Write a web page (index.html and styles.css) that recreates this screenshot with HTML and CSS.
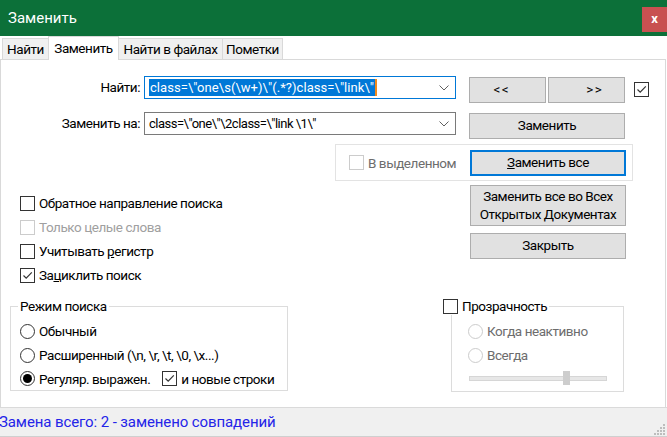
FILE: index.html
```html
<!DOCTYPE html>
<html lang="ru">
<head>
<meta charset="utf-8">
<title>Заменить</title>
<link rel="stylesheet" href="styles.css">
</head>
<body>
<div class="window">
  <header class="titlebar">
    <span class="title">Заменить</span>
    <span class="close">x</span>
  </header>
  <nav class="tabs">
    <span class="tab t1">Найти</span>
    <span class="tab t2 active">Заменить</span>
    <span class="tab t3">Найти в файлах</span>
    <span class="tab t4">Пометки</span>
  </nav>
  <main class="panel">
    <div class="row row-find">
      <span class="lbl">Найти:</span>
      <div class="combo focused">
        <span class="combo-text find-text"><span class="sel">class=\"one\s(\w+)\"(.*?)class=\"link\"</span><span class="caret"></span></span>
        <svg class="chev" width="10" height="6" viewBox="0 0 10 6"><path d="M0.5 0.5 L5 5 L9.5 0.5" fill="none" stroke="#606060" stroke-width="1"/></svg>
      </div>
      <button class="btn nav first"><span class="arrows">&lt; &lt;</span></button>
      <button class="btn nav second"><span class="arrows">&gt; &gt;</span></button>
      <span class="cb checked top-cb"><svg width="13" height="13" viewBox="0 0 13 13"><path d="M2.5 6.5 L5.2 9.2 L10.8 3.4" fill="none" stroke="#333" stroke-width="1.2"/></svg></span>
    </div>
    <div class="row row-replace">
      <span class="lbl">Заменить на:</span>
      <div class="combo">
        <span class="combo-text repl-text">class=\"one\"\2class=\"link \1\"</span>
        <svg class="chev" width="10" height="6" viewBox="0 0 10 6"><path d="M0.5 0.5 L5 5 L9.5 0.5" fill="none" stroke="#606060" stroke-width="1"/></svg>
      </div>
      <button class="btn wide">Заменить</button>
    </div>
    <div class="selgroup">
      <span class="cb disabled"></span>
      <span class="opt-text muted">В выделенном</span>
      <button class="btn wide default"><u>З</u>аменить все</button>
    </div>
    <div class="mid">
      <div class="options">
        <div class="opt"><span class="cb"></span><span class="opt-text">Обратное направление поиска</span></div>
        <div class="opt"><span class="cb disabled"></span><span class="opt-text light">Только целые слова</span></div>
        <div class="opt"><span class="cb"></span><span class="opt-text">Учитывать <u>р</u>егистр</span></div>
        <div class="opt"><span class="cb checked"><svg width="13" height="13" viewBox="0 0 13 13"><path d="M2.5 6.5 L5.2 9.2 L10.8 3.4" fill="none" stroke="#333" stroke-width="1.2"/></svg></span><span class="opt-text">За<u>ц</u>иклить поиск</span></div>
      </div>
      <div class="actions">
        <button class="btn wide tall">Заменить все во Всех<br>Открытых <u>Д</u>окументах</button>
        <button class="btn wide close-btn">Закрыть</button>
      </div>
    </div>
    <div class="bottom">
      <fieldset class="group mode">
        <legend class="legend">Режим поиска</legend>
        <div class="opt"><span class="radio"></span><span class="opt-text">Обычный</span></div>
        <div class="opt"><span class="radio"></span><span class="opt-text">Расширенный (\n, \r, \t, \0, \x...)</span></div>
        <div class="opt"><span class="radio on"></span><span class="opt-text">Регуляр. выражен.</span><span class="cb checked nl-cb"><svg width="13" height="13" viewBox="0 0 13 13"><path d="M2.5 6.5 L5.2 9.2 L10.8 3.4" fill="none" stroke="#333" stroke-width="1.2"/></svg></span><span class="opt-text">и новые строки</span></div>
      </fieldset>
      <fieldset class="group trans">
        <legend class="legend trans-legend"><span class="cb"></span><span class="opt-text">Прозрачность</span></legend>
        <div class="opt"><span class="radio disabled"></span><span class="opt-text muted">Когда неактивно</span></div>
        <div class="opt"><span class="radio disabled"></span><span class="opt-text muted">Всегда</span></div>
        <div class="slider"><span class="track"></span><span class="thumb"></span></div>
      </fieldset>
    </div>
  </main>
  <footer class="status">
    <span class="status-text">Замена всего: 2 - заменено совпадений</span>
    <svg class="grip" width="12" height="12" viewBox="0 0 12 12">
      <rect x="9" y="1" width="2" height="2" fill="#bdbdbd"/>
      <rect x="6" y="4" width="2" height="2" fill="#bdbdbd"/>
      <rect x="9" y="4" width="2" height="2" fill="#bdbdbd"/>
      <rect x="3" y="7" width="2" height="2" fill="#bdbdbd"/>
      <rect x="6" y="7" width="2" height="2" fill="#bdbdbd"/>
      <rect x="9" y="7" width="2" height="2" fill="#bdbdbd"/>
      <rect x="0" y="10" width="2" height="2" fill="#bdbdbd"/>
      <rect x="3" y="10" width="2" height="2" fill="#bdbdbd"/>
      <rect x="6" y="10" width="2" height="2" fill="#bdbdbd"/>
      <rect x="9" y="10" width="2" height="2" fill="#bdbdbd"/>
    </svg>
  </footer>
</div>
</body>
</html>
```
FILE: styles.css
```css
* { box-sizing: border-box; }
html, body { margin: 0; padding: 0; }
body {
  width: 667px;
  height: 437px;
  overflow: hidden;
  background: #ffffff;
  font-family: Roboto, "Noto Sans", sans-serif;
  font-size: 13.5px;
  letter-spacing: -0.45px;
  color: #000;
}
.window { width: 667px; height: 437px; display: flex; flex-direction: column; }

.titlebar {
  height: 36px;
  background: #0c7039;
  display: flex;
  align-items: center;
  justify-content: space-between;
  padding-left: 8px;
}
.title { color: #fff; font-size: 15px; letter-spacing: 0; }
.close {
  width: 25px; height: 25px;
  background: #c85151;
  color: #fff;
  font-weight: bold;
  font-size: 13px;
  letter-spacing: 0;
  display: flex; align-items: center; justify-content: center;
  line-height: 1;
  padding-bottom: 2px;
  margin-top: 2px;
}

.tabs {
  height: 23px;
  display: flex;
  align-items: flex-end;
  padding-left: 2px;
  position: relative;
  z-index: 1;
}
.tab {
  height: 21px;
  background: #f0f0f0;
  border: 1px solid #d9d9d9;
  border-bottom: none;
  display: flex; align-items: center; justify-content: center;
  white-space: nowrap;
  color: #000;
  margin-left: -1px;
}
.tab.t1 { width: 47px; margin-left: 0; }
.tab.t2 { width: 71px; }
.tab.t3 { width: 105px; }
.tab.t4 { width: 61px; }
.tab.active {
  background: #fff;
  height: 24px;
  margin-bottom: -1px;
  padding-bottom: 2px;
}

.panel {
  height: 348px;
  width: 666px;
  border: 1px solid #d9d9d9;
  border-bottom: none;
  display: flex;
  flex-direction: column;
}

.row { display: flex; align-items: flex-start; }
.row-find { margin-top: 16px; }
.row-replace { margin-top: 9px; }
.lbl { width: 139px; text-align: right; line-height: 23px; }
.combo {
  width: 312px; height: 23px;
  margin-left: 4px;
  border: 1px solid #7a7a7a;
  display: flex; align-items: center;
  padding-left: 4px;
  position: relative;
  white-space: nowrap;
  overflow: hidden;
  font-size: 13px;
}
.combo.focused { border-color: #0078d7; }
.combo-text { flex: 1; display: flex; align-items: center; }
.find-text { letter-spacing: 0.05px; }
.repl-text { letter-spacing: -0.5px; }
.sel { background: #0078d7; color: #fff; padding: 0 1px; line-height: 17px; }
.caret { width: 2px; height: 17px; background: #f08a1c; }
.chev { margin-right: 6px; margin-left: 4px; }

.btn {
  font-family: inherit;
  font-size: 13.5px;
  letter-spacing: -0.45px;
  color: #000;
  background: #e1e1e1;
  border: 1px solid #adadad;
  border-radius: 0;
  padding: 0;
  margin: 0;
  height: 26px;
  line-height: 1.3;
}
.btn.nav { width: 77px; margin-top: 1px; margin-left: 2px; }
.btn.nav.first { margin-left: 13px; padding-right: 14px; }
.btn.nav.second { padding-left: 14px; }
.arrows { letter-spacing: -1px; }
.btn.wide { width: 156px; }
.row-replace .btn.wide { margin-left: 13px; margin-top: 1px; }
.btn.default { border: 2px solid #0078d7; }
.btn.tall { height: 41px; }
.btn.close-btn { margin-top: 7px; height: 26px; }

.cb {
  width: 15px; height: 15px;
  border: 1px solid #333;
  background: #fff;
  display: inline-flex; align-items: center; justify-content: center;
  flex: none;
}
.cb.disabled { border-color: #cccccc; }
.top-cb { margin-left: 9px; margin-top: 6px; }

.selgroup {
  margin-top: 5px;
  margin-left: 334px;
  width: 298px;
  height: 37px;
  border: 1px solid #e3e3e3;
  display: flex; align-items: center;
  padding-left: 13px;
  padding-right: 6px;
}
.selgroup .btn { margin-left: auto; }

.opt-text { margin-left: 4px; white-space: nowrap; }
.muted { color: #6d6d6d; }
.light { color: #a0a0a0; }

.mid { display: flex; justify-content: space-between; }
.options { padding-left: 19px; margin-top: 10px; }
.opt { display: flex; align-items: center; height: 24px; }
.actions { display: flex; flex-direction: column; margin-top: 4px; margin-right: 39px; }

.bottom { display: flex; align-items: flex-start; margin-top: 10px; }
.group {
  margin: 0;
  border: 1px solid #dcdcdc;
  min-width: 0;
}
.legend { padding: 0 2px; line-height: 18px; }
.mode {
  margin-left: 9px;
  width: 278px;
  padding: 4px 0 0 9px;
}
.mode .legend { margin-left: -2px; }
.mode .opt:last-child { height: 23px; }
.trans {
  margin-left: 163px;
  width: 173px;
  padding: 4px 0 0 16px;
  height: 95px;
}
.trans-legend { display: flex; align-items: center; margin-left: -25px; padding: 0 2px 0 0; }

.radio {
  width: 15px; height: 15px;
  border-radius: 50%;
  border: 1px solid #333;
  background: #fff;
  flex: none;
  display: inline-flex; align-items: center; justify-content: center;
}
.radio.on::after {
  content: "";
  width: 9px; height: 9px;
  border-radius: 50%;
  background: #000;
}
.radio.disabled { border-color: #cccccc; }
.nl-cb { margin-left: 12px; }

.slider { position: relative; width: 138px; height: 14px; margin-top: 4px; margin-left: 1px; display: flex; align-items: center; }
.track { width: 138px; height: 5px; background: #e7e7e7; border: 1px solid #d6d6d6; }
.thumb { position: absolute; left: 94px; top: 0; width: 7px; height: 14px; background: #cdcdcd; }

.status {
  height: 30px;
  background: #f0f0f0;
  border-top: 1px solid #dadada;
  border-bottom: 1px solid #cfcfcf;
  display: flex; align-items: center;
  position: relative;
}
.status-text { color: #2424e8; font-size: 15px; letter-spacing: -0.1px; margin-left: -1px; }
.grip { position: absolute; right: 1px; bottom: 1px; }
```
